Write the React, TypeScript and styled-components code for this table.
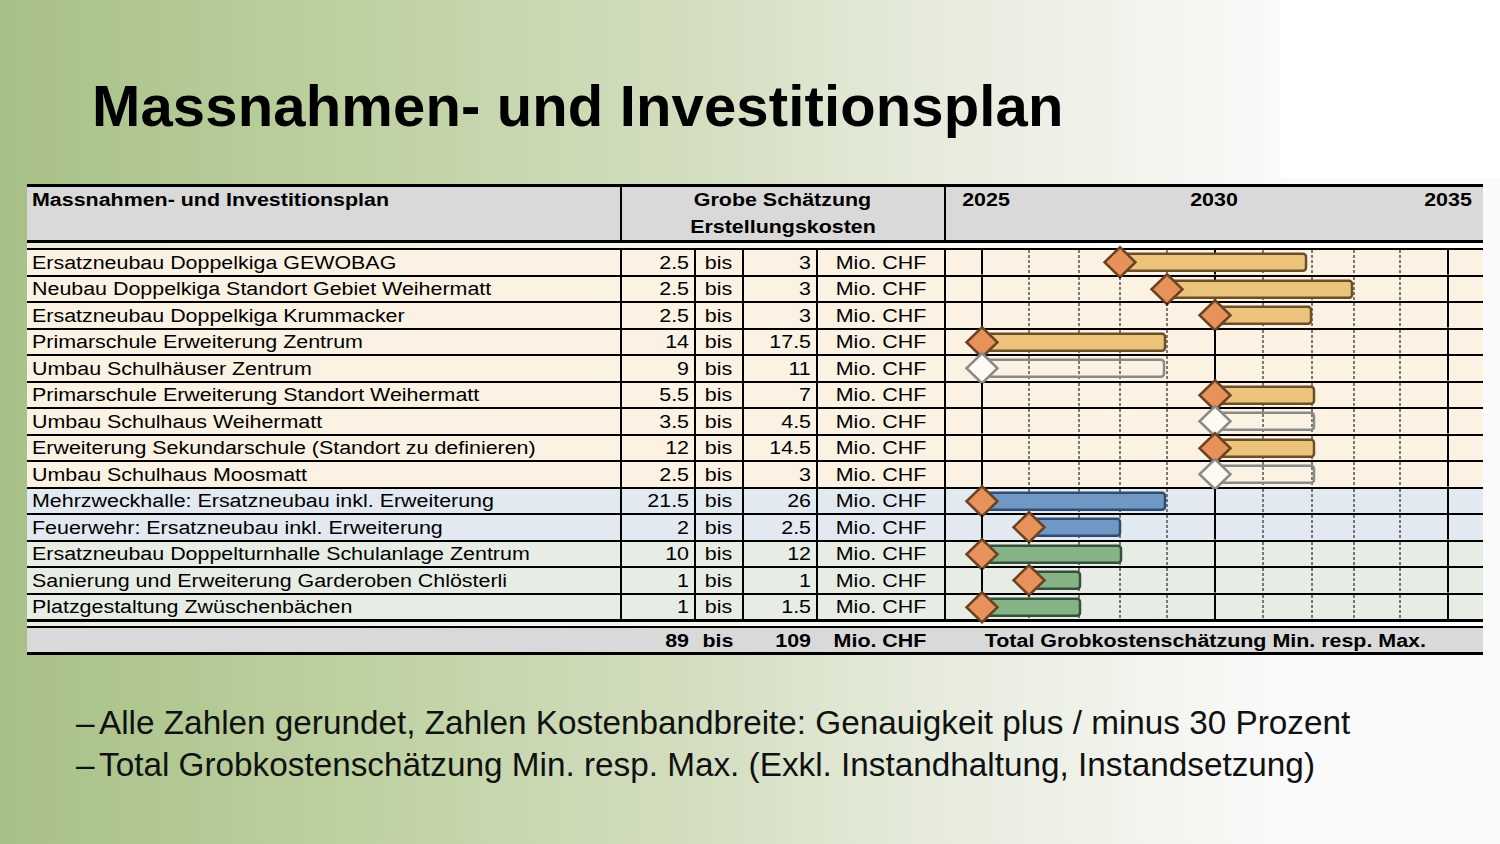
import React from 'react'
import styled, { createGlobalStyle } from 'styled-components'

type Tone = 'cream' | 'blue' | 'green'
type BarKind = 'tan' | 'outline' | 'blue' | 'green'

type Item = {
  label: string
  min: string
  max: string
  tone: Tone
  kind: BarKind
  start: number // index into GRID
  end: number // px inside gantt cell
}

// x of the year lines inside the gantt cell, 2025 … 2035
const GRID = [36, 83, 133, 174, 221, 269, 317, 366, 408, 454, 502]
const SOLID = [0, 5, 10]
const ROW_H = 24.5

const YEARS: [string, number][] = [
  ['2025', GRID[0] + 4],
  ['2030', GRID[5] - 1],
  ['2035', GRID[10]],
]

const items: Item[] = [
  { label: 'Ersatzneubau Doppelkiga GEWOBAG', min: '2.5', max: '3', tone: 'cream', kind: 'tan', start: 3, end: 360 },
  { label: 'Neubau Doppelkiga Standort Gebiet Weihermatt', min: '2.5', max: '3', tone: 'cream', kind: 'tan', start: 4, end: 406 },
  { label: 'Ersatzneubau Doppelkiga Krummacker', min: '2.5', max: '3', tone: 'cream', kind: 'tan', start: 5, end: 365 },
  { label: 'Primarschule Erweiterung Zentrum', min: '14', max: '17.5', tone: 'cream', kind: 'tan', start: 0, end: 219 },
  { label: 'Umbau Schulhäuser Zentrum', min: '9', max: '11', tone: 'cream', kind: 'outline', start: 0, end: 218 },
  { label: 'Primarschule Erweiterung Standort Weihermatt', min: '5.5', max: '7', tone: 'cream', kind: 'tan', start: 5, end: 368 },
  { label: 'Umbau Schulhaus Weihermatt', min: '3.5', max: '4.5', tone: 'cream', kind: 'outline', start: 5, end: 368 },
  { label: 'Erweiterung Sekundarschule (Standort zu definieren)', min: '12', max: '14.5', tone: 'cream', kind: 'tan', start: 5, end: 368 },
  { label: 'Umbau Schulhaus Moosmatt', min: '2.5', max: '3', tone: 'cream', kind: 'outline', start: 5, end: 368 },
  { label: 'Mehrzweckhalle: Ersatzneubau inkl. Erweiterung', min: '21.5', max: '26', tone: 'blue', kind: 'blue', start: 0, end: 219 },
  { label: 'Feuerwehr: Ersatzneubau inkl. Erweiterung', min: '2', max: '2.5', tone: 'blue', kind: 'blue', start: 1, end: 174 },
  { label: 'Ersatzneubau Doppelturnhalle Schulanlage Zentrum', min: '10', max: '12', tone: 'green', kind: 'green', start: 0, end: 175 },
  { label: 'Sanierung und Erweiterung Garderoben Chlösterli', min: '1', max: '1', tone: 'green', kind: 'green', start: 1, end: 134 },
  { label: 'Platzgestaltung Zwüschenbächen', min: '1', max: '1.5', tone: 'green', kind: 'green', start: 0, end: 134 },
]

const toneBg: Record<Tone, string> = {
  cream: '#fbf2e3',
  blue: '#e3e9f1',
  green: '#e7ede4',
}

const barColors: Record<BarKind, { fill: string; stroke: string }> = {
  tan: { fill: '#ecc37b', stroke: '#6c4f29' },
  outline: { fill: 'none', stroke: '#8a8a8a' },
  blue: { fill: '#6f99c4', stroke: '#2f4c70' },
  green: { fill: '#85b386', stroke: '#34503a' },
}

const GlobalStyle = createGlobalStyle`
  html, body {
    margin: 0;
    padding: 0;
  }
  body {
    font-family: "Liberation Sans", Arial, sans-serif;
    color: #000;
  }
`

const Page = styled.div`
  width: 1500px;
  height: 844px;
  overflow: hidden;
  box-sizing: border-box;
  padding: 0 17px 0 27px;
  display: flex;
  flex-direction: column;
  background:
    linear-gradient(#ffffff, #ffffff) no-repeat right top / 220px 178px,
    linear-gradient(90deg, #a7c087 0%, #bcd09f 22%, #d2ddbe 45%, #e6ebdc 62%, #f4f5f0 78%, #fafafa 86%, #fafafa 100%);
`

const Title = styled.h1`
  margin: 77px 0 0 65px;
  font-size: 58px;
  line-height: 58px;
  font-weight: bold;
  letter-spacing: 0.15px;
`

const Table = styled.div`
  margin-top: 49px;
  width: 1456px;
  font-size: 18px;
`

const COLS = '593px 74px 48px 74px 128px 539px'

const Header = styled.div`
  display: grid;
  grid-template-columns: 593px 324px 539px;
  height: 53px;
  background: #d9d9d9;
  border-top: 3px solid #000;
  border-bottom: 3px solid #000;
  font-weight: bold;
  line-height: 26.6px;
`

const HeadCell = styled.div<{ $center?: boolean; $divider?: boolean }>`
  position: relative;
  padding-left: ${({ $center }) => ($center ? '0' : '5px')};
  text-align: ${({ $center }) => ($center ? 'center' : 'left')};
  border-left: ${({ $divider }) => ($divider ? '2px solid #000' : 'none')};
`

const YearLabel = styled.span`
  position: absolute;
  top: 0;
  transform: translateX(-50%);
`

const Gap = styled.div<{ $h: number }>`
  height: ${({ $h }) => $h}px;
  background: rgba(255, 255, 255, 0.7);
`

const Body = styled.div`
  border-top: 2px solid #000;
`

const Row = styled.div<{ $tone: Tone; $last?: boolean }>`
  display: grid;
  grid-template-columns: ${COLS};
  height: ${ROW_H}px;
  background: ${({ $tone }) => toneBg[$tone]};
  border-bottom: ${({ $last }) => ($last ? '3px' : '2px')} solid #000;
`

const Cell = styled.div<{ $align?: 'left' | 'right' | 'center'; $divider?: boolean }>`
  display: flex;
  align-items: center;
  justify-content: ${({ $align }) =>
    $align === 'right' ? 'flex-end' : $align === 'center' ? 'center' : 'flex-start'};
  padding: 1px ${({ $align }) => ($align === 'right' ? '5px' : '0')} 0
    ${({ $align }) => ($align === 'left' || !$align ? '5px' : '0')};
  border-left: ${({ $divider }) => ($divider ? '2px solid #000' : 'none')};
  white-space: nowrap;
  line-height: 1;
  min-width: 0;
`

// the table in the slide is a horizontally stretched image, so is its text
const Stretch = styled.span<{ $origin?: 'left' | 'right' | 'center' }>`
  display: inline-block;
  transform: scaleX(1.19);
  transform-origin: ${({ $origin }) => $origin || 'left'} center;
  white-space: nowrap;
`

const GanttCell = styled.div`
  position: relative;
  border-left: 2px solid #000;
`

const GanttSvg = styled.svg`
  position: absolute;
  left: 0;
  top: 0;
  width: 100%;
  height: 100%;
  overflow: visible;
  z-index: 1;
`

const TotalRow = styled.div`
  display: grid;
  grid-template-columns: ${COLS};
  height: 24px;
  background: #d9d9d9;
  border-top: 2px solid #000;
  border-bottom: 3px solid #000;
  font-weight: bold;
`

const TotalText = styled(Cell)`
  padding-right: 16px;
`

const Notes = styled.ul`
  list-style: none;
  margin: 47px 0 0 49px;
  padding: 0;
  font-size: 33.3px;
  line-height: 41.5px;
  color: #111;
`

const Note = styled.li`
  display: flex;
  white-space: nowrap;
`

const Dash = styled.span`
  display: inline-block;
  width: 23px;
  flex: none;
`

const Gantt = ({ item }: { item: Item }) => {
  const cy = ROW_H / 2
  const sx = GRID[item.start]
  const c = barColors[item.kind]
  const hollow = item.kind === 'outline'
  return (
    <GanttSvg>
      {GRID.map((x, i) =>
        SOLID.includes(i) ? (
          <line key={i} x1={x} x2={x} y1={0} y2={ROW_H} stroke="#000" strokeWidth={2} />
        ) : (
          <line key={i} x1={x} x2={x} y1={0} y2={ROW_H} stroke="#000" strokeWidth={1} strokeDasharray="3 2" />
        )
      )}
      <rect
        x={sx}
        y={cy - 8.5}
        width={item.end - sx}
        height={17}
        rx={3}
        fill={c.fill}
        stroke={c.stroke}
        strokeWidth={2.5}
      />
      <polygon
        points={`${sx},${cy - 15} ${sx + 15.5},${cy} ${sx},${cy + 15} ${sx - 15.5},${cy}`}
        fill={hollow ? '#fdfaf3' : '#e8925b'}
        stroke={hollow ? '#8a8a8a' : '#6a4322'}
        strokeWidth={2.5}
        strokeLinejoin="miter"
      />
    </GanttSvg>
  )
}

const App = () => {
  return (
    <>
      <GlobalStyle />
      <Page>
        <Title>Massnahmen- und Investitionsplan</Title>
        <Table>
          <Header>
            <HeadCell>
              <Stretch>Massnahmen- und Investitionsplan</Stretch>
            </HeadCell>
            <HeadCell $center $divider>
              <Stretch $origin="center">Grobe Schätzung</Stretch>
              <br />
              <Stretch $origin="center">Erstellungskosten</Stretch>
            </HeadCell>
            <HeadCell $divider>
              {YEARS.map(([year, x]) => (
                <YearLabel key={year} style={{ left: `${x}px` }}>
                  <Stretch $origin="center">{year}</Stretch>
                </YearLabel>
              ))}
            </HeadCell>
          </Header>
          <Gap $h={5} />
          <Body>
            {items.map((item, i) => (
              <Row key={item.label} $tone={item.tone} $last={i === items.length - 1}>
                <Cell $align="left">
                  <Stretch>{item.label}</Stretch>
                </Cell>
                <Cell $align="right" $divider>
                  <Stretch $origin="right">{item.min}</Stretch>
                </Cell>
                <Cell $align="center" $divider>
                  <Stretch $origin="center">bis</Stretch>
                </Cell>
                <Cell $align="right" $divider>
                  <Stretch $origin="right">{item.max}</Stretch>
                </Cell>
                <Cell $align="center" $divider>
                  <Stretch $origin="center">Mio. CHF</Stretch>
                </Cell>
                <GanttCell>
                  <Gantt item={item} />
                </GanttCell>
              </Row>
            ))}
          </Body>
          <Gap $h={4} />
          <TotalRow>
            <Cell />
            <Cell $align="right">
              <Stretch $origin="right">89</Stretch>
            </Cell>
            <Cell $align="center">
              <Stretch $origin="center">bis</Stretch>
            </Cell>
            <Cell $align="right">
              <Stretch $origin="right">109</Stretch>
            </Cell>
            <Cell $align="center">
              <Stretch $origin="center">Mio. CHF</Stretch>
            </Cell>
            <TotalText $align="center">
              <Stretch $origin="center">Total Grobkostenschätzung Min. resp. Max.</Stretch>
            </TotalText>
          </TotalRow>
        </Table>
        <Notes>
          <Note>
            <Dash>–</Dash>
            Alle Zahlen gerundet, Zahlen Kostenbandbreite: Genauigkeit plus / minus 30 Prozent
          </Note>
          <Note>
            <Dash>–</Dash>
            Total Grobkostenschätzung Min. resp. Max. (Exkl. Instandhaltung, Instandsetzung)
          </Note>
        </Notes>
      </Page>
    </>
  )
}

export default App
